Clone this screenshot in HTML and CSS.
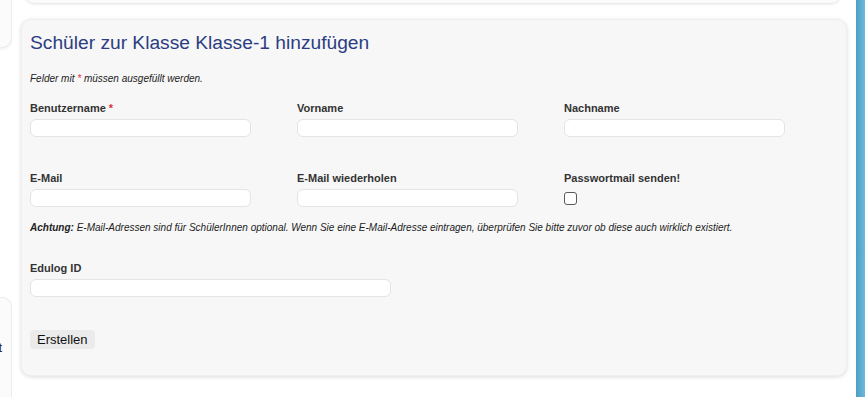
FILE: index.html
```html
<!DOCTYPE html>
<html lang="de">
<head>
  <meta charset="UTF-8" />
  <meta name="viewport" content="width=device-width, initial-scale=1.0" />
  <title>Schüler hinzufügen</title>
  <link rel="stylesheet" href="styles.css">
</head>
<body>
  <div class="page">
    <aside class="sidebar">
      <div class="side-card side-card-top"></div>
      <div class="side-card side-card-bottom">
        <span class="side-link">Liste exportiert</span>
      </div>
    </aside>

    <main class="main">
      <div class="prev-card"></div>

      <section class="card">
        <h2 class="card-title">Schüler zur Klasse Klasse-1 hinzufügen</h2>
        <p class="hint">Felder mit <span class="req">*</span> müssen ausgefüllt werden.</p>

        <form class="student-form">
          <div class="field-grid">
            <div class="field">
              <label>Benutzername <span class="req">*</span></label>
              <input type="text" class="input">
            </div>
            <div class="field">
              <label>Vorname</label>
              <input type="text" class="input">
            </div>
            <div class="field">
              <label>Nachname</label>
              <input type="text" class="input">
            </div>
          </div>

          <div class="field-grid second-row">
            <div class="field">
              <label>E-Mail</label>
              <input type="text" class="input">
            </div>
            <div class="field">
              <label>E-Mail wiederholen</label>
              <input type="text" class="input">
            </div>
            <div class="field">
              <label>Passwortmail senden!</label>
              <input type="checkbox" class="check">
            </div>
          </div>

          <p class="note"><b>Achtung:</b> E-Mail-Adressen sind für SchülerInnen optional. Wenn Sie eine E-Mail-Adresse eintragen, überprüfen Sie bitte zuvor ob diese auch wirklich existiert.</p>

          <div class="field field-wide">
            <label>Edulog ID</label>
            <input type="text" class="input">
          </div>

          <button type="button" class="btn">Erstellen</button>
        </form>
      </section>
    </main>

    <div class="edge-bar"></div>
  </div>
</body>
</html>
```

FILE: styles.css
```css
* { box-sizing: border-box; margin: 0; padding: 0; }
body {
  background: #fff;
  color: #222;
  font-family: "Liberation Sans", Arial, sans-serif;
  overflow: hidden;
}
.page {
  display: flex;
  height: 397px;
}

/* linke spalte, nur der rand ist sichtbar */
.sidebar {
  width: 12px;
  flex-shrink: 0;
  display: flex;
  flex-direction: column;
  overflow: hidden;
}
.side-card {
  width: 200px;
  margin-left: -188px;
  background: #fbfbfb;
  border: 1px solid #ececec;
  border-radius: 10px;
  box-shadow: 0 1px 3px rgba(0, 0, 0, 0.08);
  flex-shrink: 0;
}
.side-card-top {
  height: 60px;
  margin-top: -12px;
}
.side-card-bottom {
  height: 200px;
  margin-top: 249px;
  padding: 40px 9px 0 0;
  text-align: right;
}
.side-link {
  font-size: 12px;
  color: #222;
}

.main {
  width: 826px;
  margin-left: 9px;
  flex-shrink: 0;
}
.prev-card {
  height: 30px;
  margin: -27px 6px 0 3px;
  background: #fbfbfb;
  border-radius: 10px;
  box-shadow: 0 1px 3px rgba(0, 0, 0, 0.12);
}

.card {
  margin-top: 16px;
  background: #f7f7f7;
  border: 1px solid #efefef;
  border-radius: 10px;
  box-shadow: 0 1px 4px rgba(0, 0, 0, 0.14);
  padding: 10px 8px 26px;
}
.card-title {
  font-size: 19.2px;
  font-weight: normal;
  line-height: 24px;
  color: #2b3d82;
  margin-top: 1px;
}
.hint {
  margin-top: 18px;
  font-size: 10px;
  font-style: italic;
  line-height: 12px;
}
.req { color: #e0303a; }

.field-grid {
  display: grid;
  grid-template-columns: repeat(3, 267px);
  margin-top: 16px;
}
.second-row { margin-top: 34px; }
.field label {
  display: block;
  font-size: 11px;
  font-weight: bold;
  line-height: 14px;
  color: #333;
  margin-bottom: 4px;
}
.input {
  display: block;
  width: 221px;
  height: 18px;
  background: #fff;
  border: 1px solid #e4e4e4;
  border-radius: 6px;
  font: inherit;
  font-size: 12px;
  padding: 0 6px;
}
.check {
  appearance: none;
  display: block;
  width: 13px;
  height: 13px;
  margin-top: 7px;
  background: #fff;
  border: 1px solid #5a5a5a;
  border-radius: 3px;
}
.note {
  margin-top: 15px;
  font-size: 10px;
  font-style: italic;
  line-height: 12px;
}
.field-wide { margin-top: 27px; }
.field-wide .input { width: 361px; }

.btn {
  display: block;
  margin-top: 33px;
  height: 19px;
  padding: 0 7px;
  background: #ebebeb;
  border: none;
  border-radius: 4px;
  font-family: "Liberation Sans", Arial, sans-serif;
  font-size: 13px;
  color: #111;
}

.edge-bar {
  width: 9px;
  margin-left: 9px;
  flex-shrink: 0;
  background: linear-gradient(to right, #4b9fc6, #6cb8d9);
}
```
